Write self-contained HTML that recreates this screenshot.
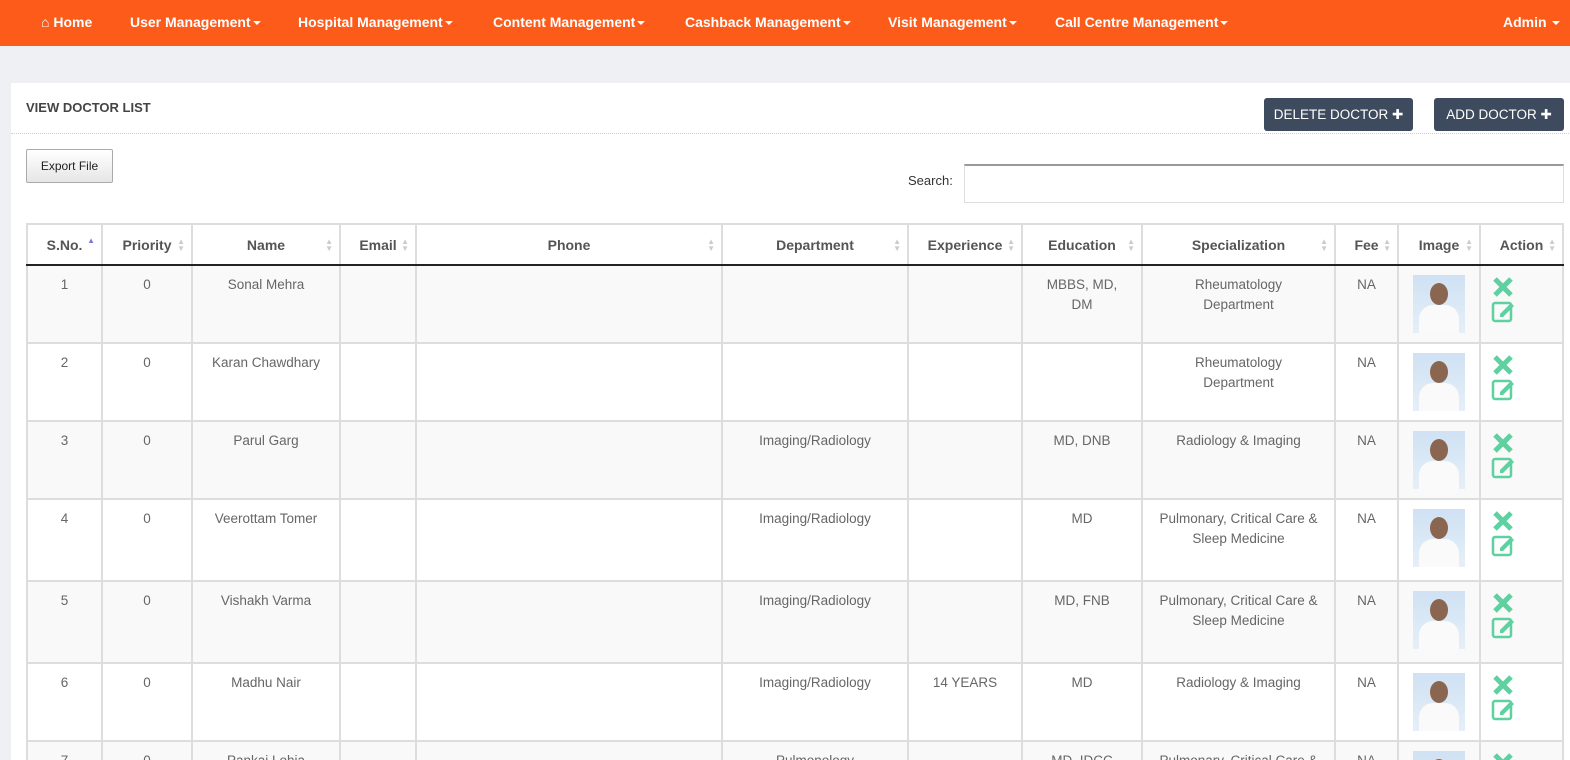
<!DOCTYPE html>
<html style="width:1570px;height:760px;overflow:hidden"><head><meta charset="utf-8"><style>
*{box-sizing:border-box;margin:0;padding:0}
body{width:1570px;height:760px;overflow:hidden;background:#eef0f4;font-family:"Liberation Sans",sans-serif;position:relative}
.nav{position:absolute;left:0;top:0;width:1570px;height:46px;background:#fd5b19;color:#fff;font-weight:bold;font-size:14px}
.nav span{position:absolute;top:14px;white-space:nowrap}
.car{display:inline-block;width:0;height:0;border-left:4px solid transparent;border-right:4px solid transparent;border-top:4px solid #fff;vertical-align:middle;margin-left:2px}
.panel{position:absolute;left:11px;top:83px;width:1570px;height:700px;background:#fff}
.title{position:absolute;left:26px;top:100px;font-weight:bold;font-size:13px;color:#444}
.hl{position:absolute;left:11px;top:133px;width:1570px;border-top:1px dotted #ccc}
.btn{position:absolute;top:98px;height:33px;background:#3e4a5e;color:#fff;font-size:13.5px;border-radius:3px;text-align:center;line-height:33px}
.exp{position:absolute;left:26px;top:149px;width:87px;height:34px;border:1px solid #aaa;border-radius:2px;background:linear-gradient(#fff,#e6e6e6);font-size:12px;text-align:center;line-height:32px;color:#222}
.sl{position:absolute;left:908px;top:173px;font-size:13px;color:#333}
.si{position:absolute;left:964px;top:164px;width:600px;height:39px;border:1px solid #ddd;border-top:2px solid #999}
table{position:absolute;left:26px;top:223px;border-collapse:collapse;table-layout:fixed;font-size:13.5px;color:#666}
td,th{border:2px solid #ddd;text-align:center;vertical-align:top}
th{height:41px;vertical-align:middle;color:#555;font-size:14px;border-bottom:2px solid #222;position:relative}
th i{position:absolute;right:6px;top:13px;font-style:normal;color:#ccc;font-size:8px;line-height:7px}
td{padding-top:9px;line-height:20px}
tr.o td{background:#f9f9f9}
.ph{width:52px;height:58px;margin:0 auto;background:linear-gradient(#cfe1f3,#e6eff8);position:relative;overflow:hidden}
.ph:before{content:"";position:absolute;left:17px;top:8px;width:18px;height:22px;border-radius:50%;background:#8a6650}
.ph:after{content:"";position:absolute;left:6px;top:30px;width:40px;height:32px;border-radius:14px 14px 0 0;background:#fafafa}
.ac{text-align:left;padding-left:10px}
</style></head><body>
<div class="nav">
<span style="left:41px">⌂ Home</span>
<span style="left:130px">User Management<i class="car"></i></span>
<span style="left:298px">Hospital Management<i class="car"></i></span>
<span style="left:493px">Content Management<i class="car"></i></span>
<span style="left:685px">Cashback Management<i class="car"></i></span>
<span style="left:888px">Visit Management<i class="car"></i></span>
<span style="left:1055px">Call Centre Management<i class="car"></i></span>
<span style="left:1503px">Admin <i class="car"></i></span>
</div>
<div class="panel"></div>
<div class="title">VIEW DOCTOR LIST</div>
<div class="hl"></div>
<div class="btn" style="left:1264px;width:149px">DELETE DOCTOR ✚</div>
<div class="btn" style="left:1434px;width:130px">ADD DOCTOR ✚</div>
<div class="exp">Export File</div>
<div class="sl">Search:</div>
<div class="si"></div>
<table>
<colgroup><col style="width:75px"><col style="width:90px"><col style="width:148px"><col style="width:76px"><col style="width:306px"><col style="width:186px"><col style="width:114px"><col style="width:120px"><col style="width:193px"><col style="width:63px"><col style="width:82px"><col style="width:83px"></colgroup>
<tr><th>S.No.<i style="color:#7b7bd8;top:12px">▲</i></th><th>Priority<i>▲<br>▼</i></th><th>Name<i>▲<br>▼</i></th><th>Email<i>▲<br>▼</i></th><th>Phone<i>▲<br>▼</i></th><th>Department<i>▲<br>▼</i></th><th>Experience<i>▲<br>▼</i></th><th>Education<i>▲<br>▼</i></th><th>Specialization<i>▲<br>▼</i></th><th>Fee<i>▲<br>▼</i></th><th>Image<i>▲<br>▼</i></th><th>Action<i>▲<br>▼</i></th></tr>
<tr class="o" style="height:78px"><td>1</td><td>0</td><td>Sonal Mehra</td><td></td><td></td><td></td><td></td><td>MBBS, MD,<br>DM</td><td>Rheumatology<br>Department</td><td>NA</td><td><div class="ph"></div></td><td class="ac"><svg width="26" height="50" viewBox="0 0 26 50"><path d="M4 4l16 16M20 4L4 20" stroke="#5fd0a0" stroke-width="5"/><rect x="2" y="28" width="18" height="18" rx="2" fill="none" stroke="#5fd0a0" stroke-width="2.5"/><path d="M9 39l11-11 3 3-11 11h-3z" fill="#5fd0a0"/></svg></td></tr>
<tr style="height:78px"><td>2</td><td>0</td><td>Karan Chawdhary</td><td></td><td></td><td></td><td></td><td></td><td>Rheumatology<br>Department</td><td>NA</td><td><div class="ph"></div></td><td class="ac"><svg width="26" height="50" viewBox="0 0 26 50"><path d="M4 4l16 16M20 4L4 20" stroke="#5fd0a0" stroke-width="5"/><rect x="2" y="28" width="18" height="18" rx="2" fill="none" stroke="#5fd0a0" stroke-width="2.5"/><path d="M9 39l11-11 3 3-11 11h-3z" fill="#5fd0a0"/></svg></td></tr>
<tr class="o" style="height:78px"><td>3</td><td>0</td><td>Parul Garg</td><td></td><td></td><td>Imaging/Radiology</td><td></td><td>MD, DNB</td><td>Radiology &amp; Imaging</td><td>NA</td><td><div class="ph"></div></td><td class="ac"><svg width="26" height="50" viewBox="0 0 26 50"><path d="M4 4l16 16M20 4L4 20" stroke="#5fd0a0" stroke-width="5"/><rect x="2" y="28" width="18" height="18" rx="2" fill="none" stroke="#5fd0a0" stroke-width="2.5"/><path d="M9 39l11-11 3 3-11 11h-3z" fill="#5fd0a0"/></svg></td></tr>
<tr style="height:82px"><td>4</td><td>0</td><td>Veerottam Tomer</td><td></td><td></td><td>Imaging/Radiology</td><td></td><td>MD</td><td>Pulmonary, Critical Care &amp;<br>Sleep Medicine</td><td>NA</td><td><div class="ph"></div></td><td class="ac"><svg width="26" height="50" viewBox="0 0 26 50"><path d="M4 4l16 16M20 4L4 20" stroke="#5fd0a0" stroke-width="5"/><rect x="2" y="28" width="18" height="18" rx="2" fill="none" stroke="#5fd0a0" stroke-width="2.5"/><path d="M9 39l11-11 3 3-11 11h-3z" fill="#5fd0a0"/></svg></td></tr>
<tr class="o" style="height:82px"><td>5</td><td>0</td><td>Vishakh Varma</td><td></td><td></td><td>Imaging/Radiology</td><td></td><td>MD, FNB</td><td>Pulmonary, Critical Care &amp;<br>Sleep Medicine</td><td>NA</td><td><div class="ph"></div></td><td class="ac"><svg width="26" height="50" viewBox="0 0 26 50"><path d="M4 4l16 16M20 4L4 20" stroke="#5fd0a0" stroke-width="5"/><rect x="2" y="28" width="18" height="18" rx="2" fill="none" stroke="#5fd0a0" stroke-width="2.5"/><path d="M9 39l11-11 3 3-11 11h-3z" fill="#5fd0a0"/></svg></td></tr>
<tr style="height:78px"><td>6</td><td>0</td><td>Madhu Nair</td><td></td><td></td><td>Imaging/Radiology</td><td>14 YEARS</td><td>MD</td><td>Radiology &amp; Imaging</td><td>NA</td><td><div class="ph"></div></td><td class="ac"><svg width="26" height="50" viewBox="0 0 26 50"><path d="M4 4l16 16M20 4L4 20" stroke="#5fd0a0" stroke-width="5"/><rect x="2" y="28" width="18" height="18" rx="2" fill="none" stroke="#5fd0a0" stroke-width="2.5"/><path d="M9 39l11-11 3 3-11 11h-3z" fill="#5fd0a0"/></svg></td></tr>
<tr class="o" style="height:78px"><td>7</td><td>0</td><td>Pankaj Lohia</td><td></td><td></td><td>Pulmonology</td><td></td><td>MD, IDCC</td><td>Pulmonary, Critical Care &amp;</td><td>NA</td><td><div class="ph"></div></td><td class="ac"><svg width="26" height="50" viewBox="0 0 26 50"><path d="M4 4l16 16M20 4L4 20" stroke="#5fd0a0" stroke-width="5"/></svg></td></tr>
</table>
</body></html>
